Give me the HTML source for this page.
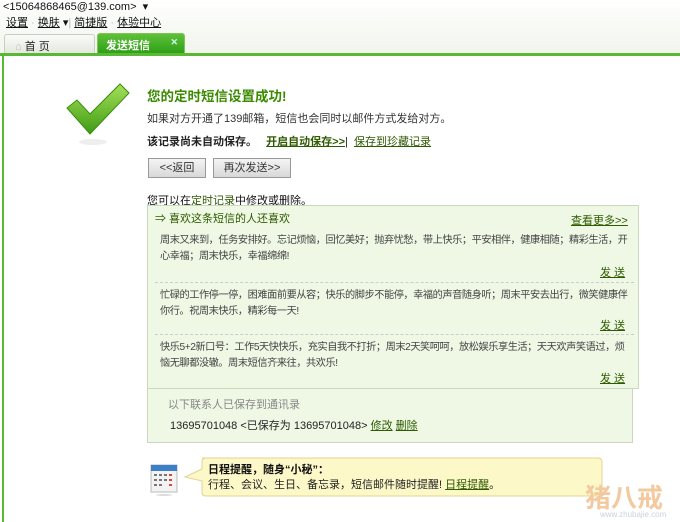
<!DOCTYPE html>
<html><head><meta charset="utf-8"><style>
*{margin:0;padding:0;box-sizing:border-box}
body{width:680px;height:522px;overflow:hidden;background:#fff;font-family:"Liberation Sans","Noto Sans CJK SC",sans-serif;font-size:11px;color:#333;position:relative}
.a{position:absolute;white-space:nowrap}
a,u{color:#2f5a00;text-decoration:underline}
.g{color:#3d7a00}
.t{font-size:10.2px;letter-spacing:-0.45px;line-height:16px;color:#444}
</style></head><body>
<div class="a" style="left:0;top:0;width:680px;height:53px;background:linear-gradient(#fff,#f1f5ec)"></div>
<div class="a" style="left:3px;top:0;font-size:11px;color:#111">&lt;15064868465@139.com&gt; &nbsp;▾</div>
<div class="a" style="left:6px;top:14px;font-size:11px;color:#111"><u style="color:#111">设置</u> <span style="color:#bbb">·</span> <u style="color:#111">换肤</u> ▾<span style="color:#bbb">|</span> <u style="color:#111">简捷版</u> <span style="color:#bbb">·</span> <u style="color:#111">体验中心</u></div>
<div class="a" style="left:4px;top:34px;width:91px;height:20px;border:1px solid #c6cfc0;border-bottom:none;border-radius:3px 3px 0 0;background:linear-gradient(#fafafa,#e3e8de);padding:3px 0 0 10px;color:#222"><span style="color:#bbb">⌂</span> 首 页</div>
<div class="a" style="left:97px;top:33px;width:88px;height:21px;border:1px solid #7fc455;border-radius:3px 3px 0 0;background:linear-gradient(#5fc03a,#2ea015);padding:3px 0 0 8px;color:#fff;font-weight:bold">发送短信<span style="position:absolute;right:6px;top:3px;font-size:9px;color:#cfe">✕</span></div>
<div class="a" style="left:0;top:53px;width:680px;height:3px;background:#5bb834"></div>
<div class="a" style="left:2px;top:53px;width:2px;height:469px;background:#5bb834"></div>
<svg class="a" style="left:65px;top:82px" width="66" height="66" viewBox="0 0 66 66"><defs><linearGradient id="c" x1="0" y1="0" x2="0" y2="1"><stop offset="0" stop-color="#a6e05a"/><stop offset="1" stop-color="#3d9b12"/></linearGradient></defs><path d="M2 26 L12 18 L25 32 L55 2 L64 11 L25 52 Z" fill="url(#c)" stroke="#3a8a10" stroke-width="1"/><ellipse cx="28" cy="60" rx="14" ry="3" fill="#eee"/></svg>
<div class="a g" style="left:147px;top:85px;font-size:13.5px;font-weight:bold;color:#3b8a00">您的定时短信设置成功!</div>
<div class="a" style="left:147px;top:110px;font-size:11px;color:#333">如果对方开通了139邮箱，短信也会同时以邮件方式发给对方。</div>
<div class="a" style="left:147px;top:133px;font-size:11px;font-weight:bold;color:#222">该记录尚未自动保存。 &nbsp;&nbsp;<a style="color:#2f5a00">开启自动保存&gt;&gt;</a><span style="font-weight:normal">| &nbsp;<a>保存到珍藏记录</a></span></div>
<div class="a" style="left:148px;top:158px;width:58px;height:20px;border:1px solid #999;background:linear-gradient(#f4f4f4,#d8d8d8);text-align:center;line-height:18px;color:#333">&lt;&lt;返回</div>
<div class="a" style="left:213px;top:158px;width:78px;height:20px;border:1px solid #999;background:linear-gradient(#f4f4f4,#d8d8d8);text-align:center;line-height:18px;color:#333">再次发送&gt;&gt;</div>
<div class="a" style="left:147px;top:192px;color:#111">您可以在<a>定时记录</a>中修改或删除。</div>
<div class="a" style="left:147px;top:205px;width:492px;height:184px;background:#eef8e4;border:1px solid #cdd8c0"></div>
<div class="a" style="left:155px;top:210px;color:#2f5a00">⇒ 喜欢这条短信的人还喜欢</div>
<div class="a" style="left:571px;top:212px"><a>查看更多&gt;&gt;</a></div>
<div class="a t" style="left:160px;top:233px">周末又来到，任务安排好。忘记烦恼，回忆美好；抛弃忧愁，带上快乐；平安相伴，健康相随；精彩生活，开<br>心幸福；周末快乐，幸福绵绵!</div>
<div class="a" style="left:600px;top:264px"><a>发 送</a></div>
<div class="a" style="left:155px;top:282px;width:479px;border-top:1px dashed #ccc"></div>
<div class="a t" style="left:160px;top:288px">忙碌的工作停一停，困难面前要从容；快乐的脚步不能停，幸福的声音随身听；周末平安去出行，微笑健康伴<br>你行。祝周末快乐，精彩每一天!</div>
<div class="a" style="left:600px;top:317px"><a>发 送</a></div>
<div class="a" style="left:155px;top:334px;width:479px;border-top:1px dashed #ccc"></div>
<div class="a t" style="left:160px;top:340px">快乐5+2新口号：工作5天快快乐，充实自我不打折；周末2天笑呵呵，放松娱乐享生活；天天欢声笑语过，烦<br>恼无聊都没辙。周末短信齐来往，共欢乐!</div>
<div class="a" style="left:600px;top:370px"><a>发 送</a></div>
<div class="a" style="left:147px;top:389px;width:486px;height:54px;background:#eef8e4;border:1px solid #cdd8c0;border-top:none"></div>
<div class="a" style="left:168px;top:396px;color:#888">以下联系人已保存到通讯录</div>
<div class="a" style="left:170px;top:417px;color:#222">13695701048 &lt;已保存为 13695701048&gt; <a>修改</a> <a>删除</a></div>
<svg class="a" style="left:150px;top:462px" width="28" height="34" viewBox="0 0 28 34"><rect x="1" y="3" width="26" height="27" fill="#f3f3f3" stroke="#bbb"/><rect x="1" y="3" width="26" height="6" fill="#3a7fc8"/><g fill="#777"><rect x="4" y="12" width="3" height="2"/><rect x="9" y="12" width="3" height="2"/><rect x="14" y="12" width="3" height="2"/><rect x="4" y="17" width="3" height="2"/><rect x="9" y="17" width="3" height="2"/><rect x="14" y="17" width="3" height="2"/><rect x="4" y="22" width="3" height="2"/><rect x="9" y="22" width="3" height="2"/></g><g fill="#d44"><rect x="19" y="12" width="3" height="2"/><rect x="19" y="17" width="3" height="2"/><rect x="19" y="22" width="3" height="2"/></g><ellipse cx="14" cy="33" rx="8" ry="1" fill="#ddd"/></svg>
<svg class="a" style="left:182px;top:457px" width="422" height="40"><path d="M20 1 H416 Q420 1 420 5 V35 Q420 39 416 39 H24 Q20 39 20 35 V24 L3 20 L20 12 V5 Q20 1 24 1Z" fill="#fdf8c8" stroke="#e2d490"/></svg>
<div class="a" style="left:208px;top:461px;font-weight:bold;color:#111">日程提醒，随身“小秘”：</div>
<div class="a" style="left:208px;top:476px;color:#222">行程、会议、生日、备忘录，短信邮件随时提醒! <a>日程提醒</a>。</div>
<div class="a" style="left:585px;top:478px;font-size:26px;color:#f3c9a0;font-weight:bold">猪八戒</div>
<div class="a" style="left:600px;top:510px;font-size:8px;color:#c9d3dd">www.zhubajie.com</div>
</body></html>
